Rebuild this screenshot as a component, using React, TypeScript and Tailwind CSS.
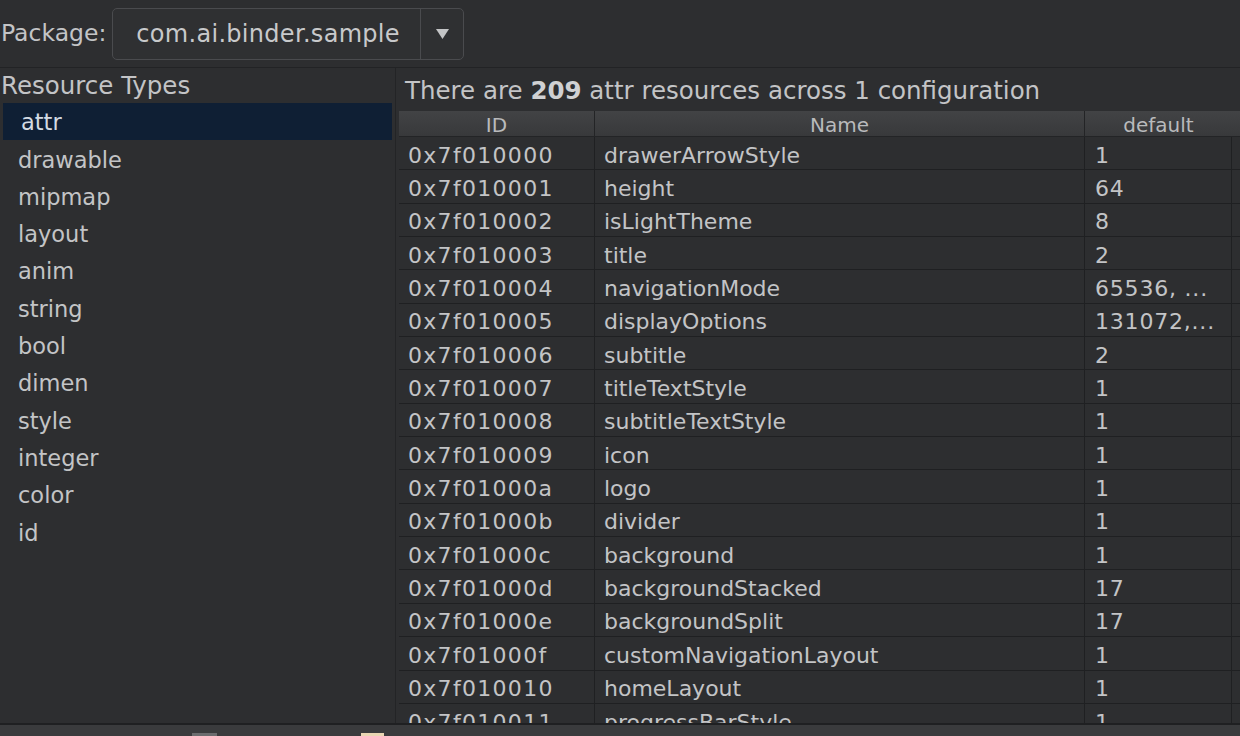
import React from 'react';

const types = ['attr', 'drawable', 'mipmap', 'layout', 'anim', 'string', 'bool', 'dimen', 'style', 'integer', 'color', 'id'];

const rows: [string, string, string][] = [
  ['0x7f010000', 'drawerArrowStyle', '1'],
  ['0x7f010001', 'height', '64'],
  ['0x7f010002', 'isLightTheme', '8'],
  ['0x7f010003', 'title', '2'],
  ['0x7f010004', 'navigationMode', '65536, ...'],
  ['0x7f010005', 'displayOptions', '131072,...'],
  ['0x7f010006', 'subtitle', '2'],
  ['0x7f010007', 'titleTextStyle', '1'],
  ['0x7f010008', 'subtitleTextStyle', '1'],
  ['0x7f010009', 'icon', '1'],
  ['0x7f01000a', 'logo', '1'],
  ['0x7f01000b', 'divider', '1'],
  ['0x7f01000c', 'background', '1'],
  ['0x7f01000d', 'backgroundStacked', '17'],
  ['0x7f01000e', 'backgroundSplit', '17'],
  ['0x7f01000f', 'customNavigationLayout', '1'],
  ['0x7f010010', 'homeLayout', '1'],
  ['0x7f010011', 'progressBarStyle', '1'],
];

export default function App() {
  return (
    <div
      className="w-[1240px] h-[736px] overflow-hidden bg-[#2d2e30] text-[#c3c4c6] flex flex-col"
      style={{ fontFamily: '"DejaVu Sans", "Liberation Sans", sans-serif' }}
    >
      {/* Package chooser */}
      <div className="h-[68px] shrink-0 flex items-center border-b border-[#222325]">
        <span className="text-[23.5px] pl-[1px] pr-[4px]">Package:</span>
        <div className="ml-[2px] w-[352px] h-[52px] rounded-[5px] border border-[#4a4b4e] bg-[#2f3032] flex items-center">
          <span className="flex-1 pl-[23px] text-[24px] tracking-[0.3px] text-[#c8c9cb]">com.ai.binder.sample</span>
          <div className="w-[43px] h-full border-l border-[#4a4b4e] flex items-center justify-center">
            <svg width="13" height="10" viewBox="0 0 13 10" aria-hidden="true">
              <path d="M0 0h13L6.5 10z" fill="#c3c4c6" />
            </svg>
          </div>
        </div>
      </div>

      <div className="flex-1 flex min-h-0">
        {/* Resource types list */}
        <div className="w-[396px] shrink-0 border-r border-[#232426] flex flex-col">
          <div className="h-[35px] flex items-center text-[24.5px] pl-[1px] pt-[2px]">Resource Types</div>
          {types.map((t, i) => (
            <div
              key={t}
              className={
                'h-[37.3px] flex items-center pl-[18px] pt-[3px] text-[22.5px] ' +
                (i === 0 ? 'bg-[#0f1f34] text-[#d4dbe3] mx-[3px] pl-[15px]' : '')
              }
            >
              {t}
            </div>
          ))}
        </div>

        {/* Resources table */}
        <div className="flex-1 flex flex-col min-w-0 pl-[3px]">
          <div className="h-[43px] flex items-center pl-[6px] pt-[3px] text-[24.5px] whitespace-nowrap">
            There are&nbsp;<b className="font-bold text-[#d0d1d3]">209</b>&nbsp;attr resources across&nbsp;
            <b className="font-normal">1</b>&nbsp;configuration
          </div>
          <div className="flex h-[26px] bg-gradient-to-b from-[#424345] to-[#38393b] border-b border-[#232426] text-[20px] text-[#b9babc]">
            <div className="w-[196px] flex items-center justify-center pt-[2px] border-r border-[#232426]">ID</div>
            <div className="w-[490px] flex items-center justify-center pt-[2px] border-r border-[#232426]">Name</div>
            <div className="w-[147px] flex items-center justify-center pt-[2px]">default</div>
          </div>
          <div className="flex-1 overflow-hidden">
            {rows.map(([id, name, def]) => (
              <div key={id} className="flex h-[33.35px] border-b border-[#1f2022] text-[22px]">
                <div className="w-[196px] flex items-center pl-[9px] pt-[4px] tracking-[1.3px] border-r border-[#1f2022]">{id}</div>
                <div className="w-[490px] flex items-center pl-[9px] pt-[4px] border-r border-[#1f2022]">{name}</div>
                <div className="w-[147px] flex items-center pl-[10px] pt-[4px] tracking-[0.8px] border-r border-[#1f2022] whitespace-nowrap overflow-hidden">{def}</div>
                <div className="flex-1" />
              </div>
            ))}
          </div>
        </div>
      </div>

      {/* Bottom strip */}
      <div className="h-[13px] shrink-0 border-t-2 border-[#1f2022] bg-[#3a3b3d] relative">
        <div className="absolute left-[192px] top-[8px] w-[25px] h-[6px] bg-[#6b6c6e]" />
        <div className="absolute left-[361px] top-[8px] w-[23px] h-[6px] bg-[#e9d6b3]" />
      </div>
    </div>
  );
}
